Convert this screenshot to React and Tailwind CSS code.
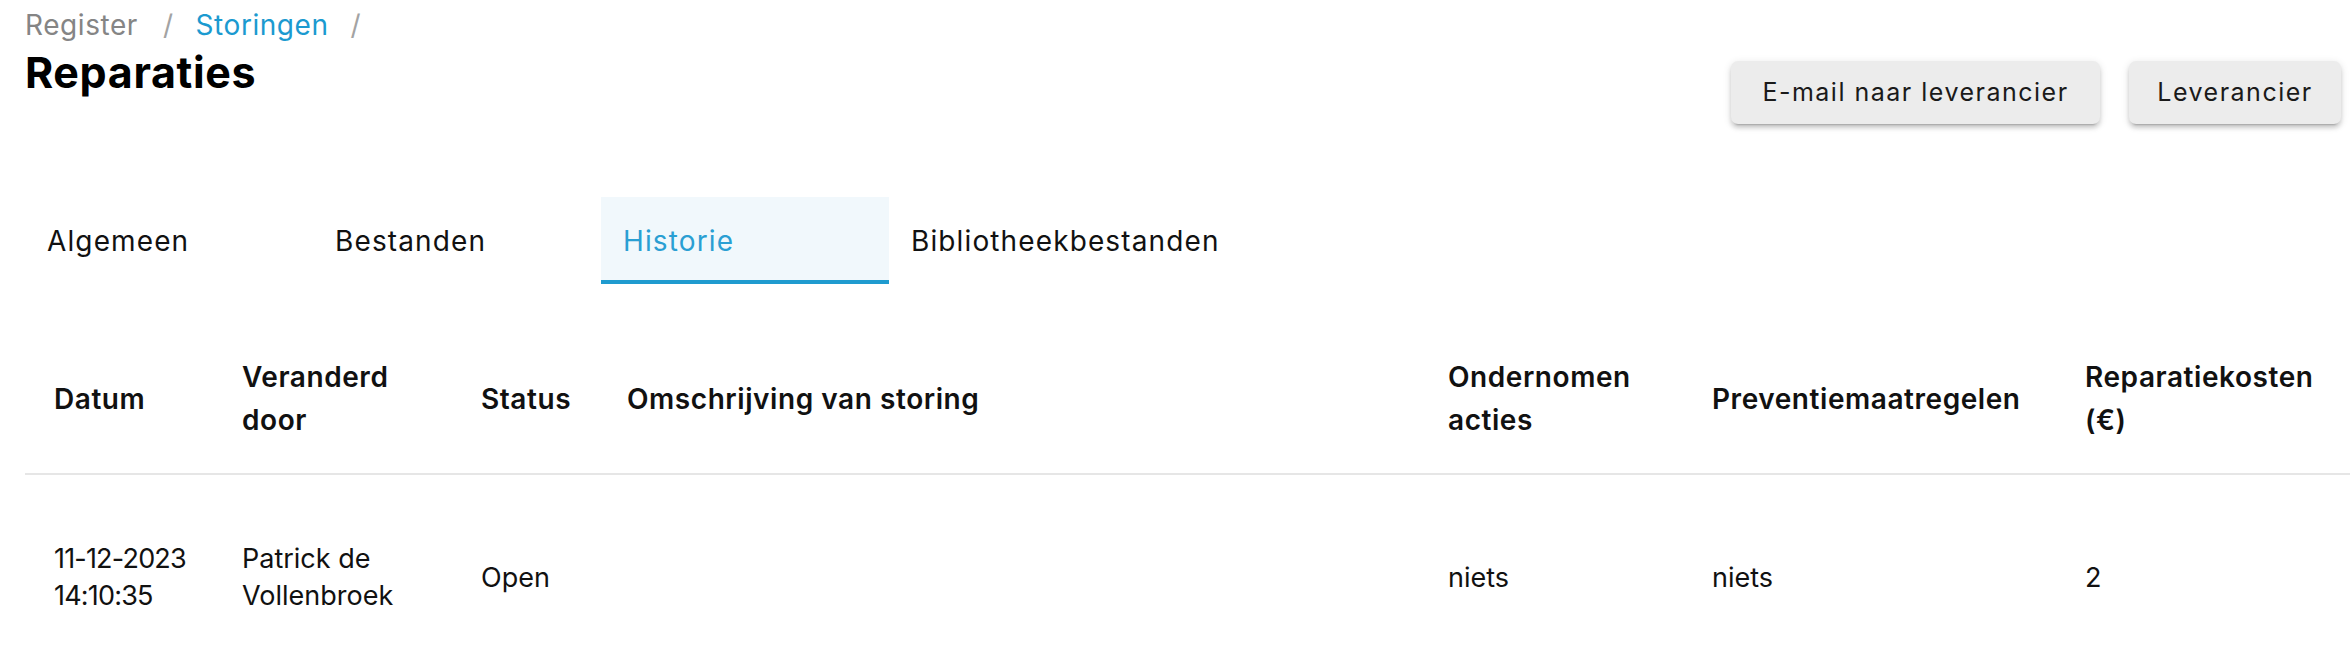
import { useState } from 'react'

const tabs = ['Algemeen', 'Bestanden', 'Historie', 'Bibliotheekbestanden']

const rows = [
  {
    datum: ['11-12-2023', '14:10:35'],
    door: ['Patrick de', 'Vollenbroek'],
    status: 'Open',
    omschrijving: '',
    acties: 'niets',
    preventie: 'niets',
    kosten: '2',
  },
]

export default function App() {
  const [active, setActive] = useState(2)

  const th = "text-left align-middle font-semibold text-[28px] tracking-[0.02em] px-[29px] py-[31px] leading-[43px] whitespace-nowrap"
  const td = "text-left align-middle text-[27px] px-[29px] py-[65px] leading-[37px] whitespace-nowrap"
  const btn = "h-[63px] rounded-[7px] bg-[#ececec] text-[25px] tracking-[0.06em] text-[#1a1a1a] shadow-[0_5px_2px_-4px_rgba(0,0,0,0.2),0_4px_4px_0_rgba(0,0,0,0.14),0_2px_9px_0_rgba(0,0,0,0.12)]"

  return (
    <div className="min-h-screen bg-white text-[#111] pl-[25px] pt-[4px] font-['Inter','Noto_Sans',sans-serif]">
      {/* Header */}
      <div className="flex items-start justify-between pr-[9px]">
        <div>
          <div className="flex items-center text-[28px] tracking-[0.02em] leading-[43px]">
            <span className="text-[#858585]">Register</span>
            <span className="pl-[25px] pr-[22px] text-[#a3a3a3]">/</span>
            <span className="text-[#1b9ad0]">Storingen</span>
            <span className="pl-[22px] text-[#a3a3a3]">/</span>
          </div>
          <h1 className="mt-[1px] text-[43px] tracking-[0.015em] leading-[48px] font-bold text-black">Reparaties</h1>
        </div>
        <div className="mt-[57px] flex gap-[29px]">
          <button className={`${btn} w-[369px]`}>E-mail naar leverancier</button>
          <button className={`${btn} w-[212px]`}>Leverancier</button>
        </div>
      </div>

      {/* Tabs */}
      <div className="mt-[73px] flex">
        {tabs.map((t, i) => (
          <button
            key={t}
            onClick={() => setActive(i)}
            className={
              i === active
                ? "min-w-[288px] h-[87px] px-[22px] text-left text-[28px] tracking-[0.04em] text-[#2a9fd3] bg-[#f1f8fc] border-b-[4px] border-[#1f9bcf] pt-[4px]"
                : "min-w-[288px] h-[87px] px-[22px] text-left text-[28px] tracking-[0.04em] text-[#111]"
            }
          >
            {t}
          </button>
        ))}
      </div>

      {/* History table */}
      <table className="mt-[41px] w-full table-fixed border-collapse">
        <colgroup>
          <col className="w-[188px]" />
          <col className="w-[239px]" />
          <col className="w-[146px]" />
          <col className="w-[821px]" />
          <col className="w-[264px]" />
          <col className="w-[373px]" />
          <col />
        </colgroup>
        <thead>
          <tr className="border-b-2 border-[#e6e6e6]">
            <th className={th}>Datum</th>
            <th className={th}>Veranderd<br />door</th>
            <th className={th}>Status</th>
            <th className={th}>Omschrijving van storing</th>
            <th className={th}>Ondernomen<br />acties</th>
            <th className={th}>Preventiemaatregelen</th>
            <th className={th}>Reparatiekosten<br />(€)</th>
          </tr>
        </thead>
        <tbody>
          {rows.map((r, i) => (
            <tr key={i}>
              <td className={`${td} tracking-[-0.03em]`}>{r.datum[0]}<br />{r.datum[1]}</td>
              <td className={td}>{r.door[0]}<br />{r.door[1]}</td>
              <td className={td}>{r.status}</td>
              <td className={td}>{r.omschrijving}</td>
              <td className={td}>{r.acties}</td>
              <td className={td}>{r.preventie}</td>
              <td className={td}>{r.kosten}</td>
            </tr>
          ))}
        </tbody>
      </table>
    </div>
  )
}
